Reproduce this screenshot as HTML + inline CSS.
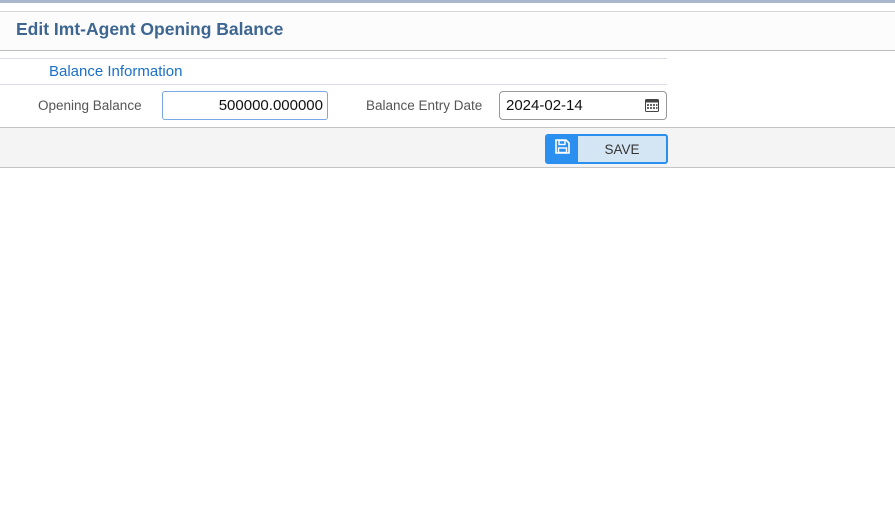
<!DOCTYPE html>
<html><head><style>
body{margin:0;width:895px;height:532px;background:#fff;font-family:"Liberation Sans",sans-serif;position:relative;overflow:hidden}
.a{position:absolute}
</style></head><body>
<div class="a" style="left:0;top:0;width:895px;height:3px;background:#a9b6cc"></div>
<div class="a" style="left:0;top:11px;width:895px;height:38px;background:#fcfcfc;border-top:1px solid #d6d6d6;border-bottom:1px solid #bdbdbd"></div>
<div class="a" style="left:16px;top:18px;font-size:17.5px;font-weight:bold;color:#3d6690;line-height:22px">Edit Imt-Agent Opening Balance</div>
<div class="a" style="left:0;top:58px;width:667px;height:1px;background:#dcdce8"></div>
<div class="a" style="left:49px;top:62px;font-size:15px;color:#1a6fc9;line-height:20px">Balance Information</div>
<div class="a" style="left:0;top:84px;width:667px;height:1px;background:#dcdce8"></div>
<div class="a" style="left:38px;top:97px;font-size:13.5px;color:#555;line-height:18px">Opening Balance</div>
<div class="a" style="left:162px;top:91px;width:164px;height:27px;border:1px solid #7aa7e6;border-radius:3px;background:#fff"></div>
<div class="a" style="left:162px;top:96px;width:161px;text-align:right;font-size:15px;color:#111;line-height:20px">500000.000000</div>
<div class="a" style="left:366px;top:97px;font-size:13.5px;color:#555;line-height:18px">Balance Entry Date</div>
<div class="a" style="left:499px;top:91px;width:166px;height:27px;border:1px solid #999;border-radius:4px;background:#fff"></div>
<div class="a" style="left:506px;top:96px;font-size:15px;color:#111;line-height:20px">2024-02-14</div>
<svg class="a" style="left:645px;top:98px" width="14" height="14" viewBox="0 0 14 14"><rect x="0.5" y="1.5" width="13" height="12" rx="1" fill="none" stroke="#444"/><rect x="0.5" y="1.5" width="13" height="3" fill="#444"/><g fill="#666"><rect x="2" y="6" width="2" height="2"/><rect x="5" y="6" width="2" height="2"/><rect x="8" y="6" width="2" height="2"/><rect x="11" y="6" width="1.5" height="2"/><rect x="2" y="9" width="2" height="2"/><rect x="5" y="9" width="2" height="2"/><rect x="8" y="9" width="2" height="2"/><rect x="11" y="9" width="1.5" height="2"/></g></svg>
<div class="a" style="left:0;top:127px;width:895px;height:39px;background:#f4f4f4;border-top:1px solid #c4c4c4;border-bottom:1px solid #c4c4c4"></div>
<div class="a" style="left:545px;top:134px;width:119px;height:26px;border:2px solid #2b8ff0;border-radius:3px;background:#d4e6f4;overflow:hidden">
<div class="a" style="left:0;top:0;width:31px;height:26px;background:#2b8ff0"></div>
<svg class="a" style="left:8px;top:3px" width="15" height="15" viewBox="0 0 15 15"><path d="M1 1h10l3 3v10H1z" fill="none" stroke="#fff" stroke-width="1.6"/><rect x="4" y="1.5" width="6" height="4" fill="none" stroke="#fff" stroke-width="1.4"/><rect x="3.5" y="9" width="8" height="4.5" fill="none" stroke="#fff" stroke-width="1.4"/></svg>
<div class="a" style="left:31px;top:1px;width:88px;text-align:center;line-height:26px;font-size:13.5px;color:#333">SAVE</div>
</div>
</body></html>
